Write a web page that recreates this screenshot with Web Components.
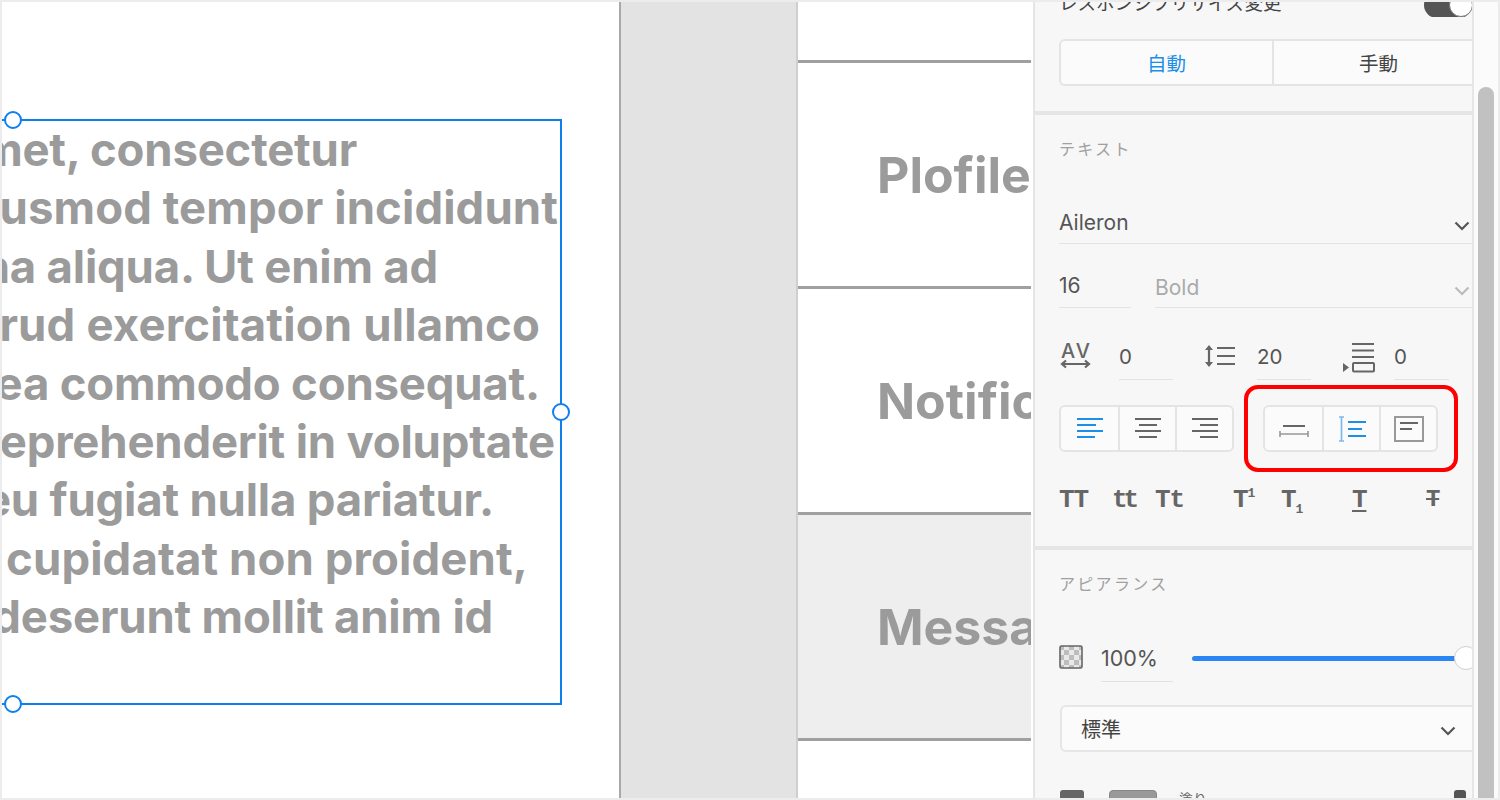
<!doctype html>
<html lang="ja"><head><meta charset="utf-8"><title>XD</title>
<style>html,body{margin:0;height:100%;background:#fff}</style></head><body>
<xd-app></xd-app>
<script>
const FONT=`Inter,"Noto Sans CJK JP",sans-serif`;
function def(name,css,html,init){customElements.define(name,class extends HTMLElement{connectedCallback(){if(this.shadowRoot)return;const r=this.attachShadow({mode:'open'});r.innerHTML=`<style>${css}</style>`+(typeof html==='function'?html(this):html);init&&init(this,r)}})}

const I={
 av:`<svg width="32" height="28" viewBox="0 0 32 28"><text x="1" y="15" font-family="Inter,sans-serif" font-size="20" font-weight="500" fill="#666" textLength="29">AV</text><path d="M2 21h27M6 17.500 2 21l4 3.500M25 17.500l4 3.500-4 3.500" fill="none" stroke="#666" stroke-width="2.200"/></svg>`,
 lh:`<svg width="32" height="24" viewBox="0 0 32 24"><path d="M5 3v18" stroke="#666" stroke-width="2.200"/><path d="M5 1 1 6h8zM5 23l-4-5h8z" fill="#666"/><path d="M13 4h18M13 12h18M13 20h18" stroke="#666" stroke-width="2"/></svg>`,
 ps:`<svg width="34" height="30" viewBox="0 0 34 30"><path d="M10 1h22M10 7.500h22M10 14h22" stroke="#666" stroke-width="2"/><rect x="11" y="20" width="21" height="8.500" rx="1" fill="none" stroke="#666" stroke-width="2"/><path d="M1 20l6 4.500-6 4.500z" fill="#666"/></svg>`,
 al:(c,a)=>{const w=[[0,26,0,19,0,26,0,18],[0,26,4,18,0,26,4,18],[0,26,8,18,0,26,8,18]][a];return `<svg width="26" height="22" viewBox="0 0 26 22">${[1,7,13,19].map((y,i)=>`<path d="M${w[i*2]} ${y}h${w[i*2+1]}" stroke="${c}" stroke-width="2"/>`).join('')}</svg>`},
 auto:`<svg width="30" height="18" viewBox="0 0 30 18"><path d="M4 6h22" stroke="#666" stroke-width="2"/><path d="M1 14h28M1 11v6M29 11v6" stroke="#999" stroke-width="1.600" fill="none"/></svg>`,
 high:`<svg width="28" height="26" viewBox="0 0 28 26"><path d="M1 1h5M1 25h5M3.500 1v24" stroke="#7cb9f0" stroke-width="1.700"/><path d="M11 6h18M11 13h14M11 20h18" stroke="#1c8fe8" stroke-width="2" transform="translate(-1 0)"/></svg>`,
 box:`<svg width="30" height="26" viewBox="0 0 30 26"><rect x="1" y="1" width="28" height="24" fill="none" stroke="#999" stroke-width="2"/><path d="M6 7h18M6 13h12" stroke="#666" stroke-width="2"/></svg>`,
 chev:c=>`<svg width="16" height="10" viewBox="0 0 16 10"><path d="M1.500 1.500 8 8l6.500-6.500" fill="none" stroke="${c}" stroke-width="2.200"/></svg>`,
 check:`<svg width="24" height="24" viewBox="0 0 24 24"><defs><pattern id="c" width="10" height="10" patternUnits="userSpaceOnUse"><rect width="10" height="10" fill="#e9e9e9"/><rect width="5" height="5" fill="#bdbdbd"/><rect x="5" y="5" width="5" height="5" fill="#bdbdbd"/></pattern></defs><rect x="1" y="1" width="22" height="22" rx="1.500" fill="url(#c)" stroke="#666" stroke-width="1.600"/></svg>`
};

def('xd-text-line',`:host{display:flex;justify-content:flex-end;height:58.400px;white-space:nowrap;font:700 45.500px/58.400px ${FONT};color:#9b9b9b;letter-spacing:-.2px}`,`<slot></slot>`,(h)=>{h.style.paddingRight=(558-(+h.getAttribute('end')))+'px';if(h.hasAttribute('ls'))h.style.letterSpacing=h.getAttribute('ls')+'px'});

def('xd-text-box',`:host{display:block;position:relative;box-sizing:border-box;height:586px;width:601px;margin:117px 0 0 -41px;border:2px solid #0f7fee}
 i{position:absolute;width:14px;height:14px;border:2px solid #0f7fee;border-radius:50%;background:#fff}`,
 `<slot></slot><i style="left:41px;top:-10px"></i><i style="right:-10px;top:282px"></i><i style="left:41px;bottom:-10px"></i>`);

def('xd-artboard-left',`:host{display:block;width:617px;background:#fff;overflow:hidden;flex:none}`,`<slot></slot>`);

def('xd-row',`:host{display:flex;align-items:center;height:223px;border-bottom:3px solid #a0a0a0;padding-left:79px;font:700 50px ${FONT};color:#9b9b9b;white-space:nowrap}
 :host([shade]){background:#eee}`,`<slot></slot>`);
def('xd-artboard-right',`:host{display:block;width:233px;flex:none;overflow:hidden;background:#fff;padding-top:58px}`,`<slot></slot>`);

def('xd-gutter',`:host{display:block;flex:none;width:175px;background:#e3e3e3;border-left:2.500px solid #a9a9a9;border-right:2px solid #cfcfcf}`,``);

def('xd-seg',`:host{display:inline-grid;grid-auto-flow:column;grid-auto-columns:var(--w,57px);height:47px;box-sizing:border-box;border:2px solid #e4e4e4;border-radius:6px;background:#fbfbfb;overflow:hidden;vertical-align:top}`,`<slot></slot>`);
def('xd-seg-item',`:host{display:flex;align-items:center;justify-content:center;font:400 19.500px ${FONT};color:#444}
 :host(:not(:first-child)){border-left:2px solid #e4e4e4}
 :host([on]){color:#1c8fe8}`,`<slot></slot>`);

def('xd-field',`:host{display:flex;align-items:flex-start;box-sizing:border-box;border-bottom:1.500px solid #e2e2e2;height:var(--h,27px);font:400 20.500px/24px ${FONT};color:#555;justify-content:space-between;flex:none}
 :host([dim]){color:#aaa}`,`<slot></slot>`);

def('xd-section',`:host{display:block;box-sizing:border-box;background:#f7f7f7;border-bottom:4px solid #e5e5e5;padding:0 0 0 24px;overflow:hidden}
 :host([last]){border-bottom:0}`,`<slot></slot>`);
def('xd-label',`:host{display:block;font:400 16px/20px ${FONT};color:#a0a0a0;letter-spacing:2.300px}`,`<slot></slot>`);

def('xd-flex',`:host{display:flex;align-items:flex-start}`,`<slot></slot>`);

def('xd-type-row',`:host{display:grid;grid-template-columns:53px 43px 78px 48px 71px 74px 1fr;height:30px;align-items:center;font:700 26px/30px "Liberation Mono",monospace;color:#666;letter-spacing:-1.200px}
 sup,sub{font-size:13px;line-height:0}`,`<span>TT</span><span style="letter-spacing:-4px">tt</span><span>Tt</span><span>T<sup>1</sup></span><span>T<sub>1</sub></span><span style="text-decoration:underline;text-decoration-thickness:2px;text-underline-offset:3px;width:20px;display:inline-block">T</span><span style="text-decoration:line-through;text-decoration-thickness:2px;font-size:24px">T</span>`);

def('xd-panel',`:host{display:block;flex:none;width:436.500px;margin-left:2px;border-left:2px solid #e5e5e5;background:#f7f7f7;overflow:hidden;font-family:${FONT}}
 .top{height:113px}
 .title{display:flex;justify-content:space-between;height:15px;position:relative;overflow:hidden;font:400 18.500px/24px ${FONT};color:#444;letter-spacing:.1px}
 .tt{margin-top:-11px;white-space:nowrap}
 .sw{width:48px;height:26px;border-radius:13px;background:#555;margin-top:-10px;position:relative;flex:none}
 .sw::after{content:"";position:absolute;right:-1px;top:1px;width:22px;height:22px;border-radius:50%;background:#fff;border:1px solid #777}
 .red{position:absolute;inset:-20px -20px -20px -19px;border:4.500px solid #f00;border-radius:14px;box-sizing:border-box}
 .wrap{position:relative;margin-left:29px;display:inline-block;height:47px}
 .sl{height:5px;border-radius:3px;background:#2a85f5;width:268px;margin:8px 0 0 19px;position:relative}
 .sl::after{content:"";position:absolute;right:-18px;top:-10px;width:22px;height:22px;border-radius:50%;background:#fff;border:1.500px solid #cfcfcf}
 .sel{display:flex;align-items:center;justify-content:space-between;box-sizing:border-box;height:47px;border:2px solid #e6e6e6;border-radius:6px;background:#fbfbfb;margin:0 -20px 0 1px;padding:0 34px 0 19px;font:400 20px ${FONT};color:#444}
 .swatch{width:48px;height:30px;border-radius:4px;background:#999;border:1px solid #888;box-sizing:border-box;margin-left:25px}
 .cb{width:24px;height:24px;background:#666;border-radius:3px;margin-left:1px}
 .fl{font:400 14px/20px ${FONT};color:#666;margin:-1px 0 0 22px}
 .ey{margin:0 6px 0 auto;width:12px;height:12px;background:#555;border-radius:3px 3px 0 0}`,
 `<xd-section class="top">
   <div class="title"><span class="tt">レスポンシブリサイズ変更</span><span class="sw"></span></div>
   <xd-seg style="--w:211px;margin-top:22px;width:440px;border-right:0;border-radius:6px 0 0 6px"><xd-seg-item on>自動</xd-seg-item><xd-seg-item>手動</xd-seg-item></xd-seg>
  </xd-section>
  <xd-section style="height:435px">
   <xd-label style="padding-top:24px;height:63px">テキスト</xd-label>
   <xd-field style="--h:42px;padding-top:9px;font-size:21px"><span>Aileron</span><span style="margin-right:2px;margin-top:1px">${I.chev('#555')}</span></xd-field>
   <xd-flex style="margin-top:30px;gap:24px"><xd-field style="width:72px;--h:34px;font-size:21px">16</xd-field><xd-field dim style="width:317px;--h:34px;padding-top:2px;font-size:21px"><span>Bold</span><span style="margin-right:2px;margin-top:1px">${I.chev('#bbb')}</span></xd-field></xd-flex>
   <xd-flex style="margin-top:35px;height:38px">
    <span style="margin-left:1px;width:59px;flex:none">${I.av}</span><xd-field style="width:54px;--h:37px;padding-top:2px">0</xd-field>
    <span style="margin-left:31px;width:53px;flex:none;padding-top:1px">${I.lh}</span><xd-field style="width:54px;--h:37px;padding-top:2px">20</xd-field>
    <span style="margin-left:31px;width:52px;flex:none">${I.ps}</span><xd-field style="width:55px;--h:37px;padding-top:2px">0</xd-field>
   </xd-flex>
   <xd-flex style="margin-top:24px;height:47px">
    <xd-seg><xd-seg-item>${I.al('#1c8fe8',0)}</xd-seg-item><xd-seg-item>${I.al('#666',1)}</xd-seg-item><xd-seg-item>${I.al('#666',2)}</xd-seg-item></xd-seg>
    <span class="wrap"><xd-seg><xd-seg-item>${I.auto}</xd-seg-item><xd-seg-item>${I.high}</xd-seg-item><xd-seg-item>${I.box}</xd-seg-item></xd-seg><span class="red"></span></span>
   </xd-flex>
   <xd-type-row style="margin-top:33px"></xd-type-row>
  </xd-section>
  <xd-section last style="height:250px">
   <xd-label style="padding-top:24px;height:62px">アピアランス</xd-label>
   <xd-flex style="height:47px;margin-top:12px">
    <span style="width:42px;flex:none;margin-top:-3px">${I.check}</span><xd-field style="width:72px;--h:35px;margin-top:-2px;padding-bottom:0;font-size:21.500px;height:36px">100%</xd-field><div class="sl"></div>
   </xd-flex>
   <div class="sel" style="margin-top:10px"><span>標準</span><span>${I.chev('#555')}</span></div>
   <xd-flex style="margin-top:38px;height:30px;overflow:hidden"><div class="cb"></div><div class="swatch"></div><div class="fl">塗り</div><div class="ey"></div></xd-flex>
  </xd-section>`);

def('xd-scroll',`:host{display:block;flex:none;width:26px;box-sizing:border-box;border-left:2px solid #e6e6e6;background:#fbfbfb;padding:85px 4px 0 4px;overflow:hidden}
 b{display:block;height:760px;border-radius:8px;background:#c1c1c1}`,`<b></b>`);

def('xd-app',`:host{display:flex;box-sizing:border-box;width:1500px;height:800px;border:2px solid #ececec;overflow:hidden;background:#fff}`,
 `<xd-artboard-left><xd-text-box>
   <xd-text-line end="355">met, consectetur</xd-text-line>
   <xd-text-line end="556" ls="0.1">usmod tempor incididunt</xd-text-line>
   <xd-text-line end="436">na aliqua. Ut enim ad</xd-text-line>
   <xd-text-line end="538" ls="0.17">rud exercitation ullamco</xd-text-line>
   <xd-text-line end="538">ea commodo consequat.</xd-text-line>
   <xd-text-line end="553">eprehenderit in voluptate</xd-text-line>
   <xd-text-line end="492">eu fugiat nulla pariatur.</xd-text-line>
   <xd-text-line end="526" ls="0.1">cupidatat non proident,</xd-text-line>
   <xd-text-line end="491">deserunt mollit anim id</xd-text-line>
  </xd-text-box></xd-artboard-left>
  <xd-gutter></xd-gutter>
  <xd-artboard-right>
   <xd-row style="height:0;padding:0"></xd-row>
   <xd-row>Plofile</xd-row><xd-row>Notifications</xd-row><xd-row shade>Messages</xd-row><xd-row style="border:0"></xd-row>
  </xd-artboard-right>
  <xd-panel></xd-panel><xd-scroll></xd-scroll>`);
</script></body></html>
